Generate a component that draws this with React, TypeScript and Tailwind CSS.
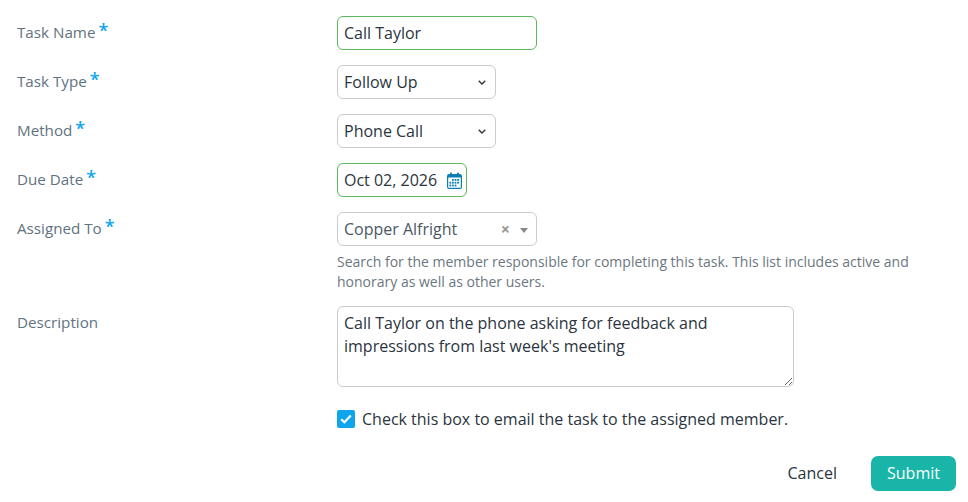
import { ReactNode } from 'react';

const fieldBase = "h-[34px] rounded-[6px] border bg-white px-[6px] text-[16px] text-[#2b3440] outline-none";

function Row({ label, required, children, className }: { label: string; required?: boolean; children: ReactNode; className?: string }) {
    return (
        <div className={`flex items-start ${className ?? ''}`}>
            <div className="w-[320px] shrink-0 pt-[5px] text-[15.2px] leading-[22px] text-[#5f7380]">
                {label}
                {required && <span className="relative -top-[1px] ml-[3px] text-[18px] font-semibold leading-none text-[#0ea5ec]">*</span>}
            </div>
            <div className="min-w-0 flex-1">{children}</div>
        </div>
    );
}

function CalendarIcon() {
    return (
        <svg width="15" height="17" viewBox="0 0 15 17" className="shrink-0">
            <rect x="0.6" y="2.6" width="13.8" height="13.8" rx="1.5" fill="none" stroke="#0b7fb5" strokeWidth="1.2" />
            <rect x="1" y="3" width="13" height="2.5" fill="#0b7fb5" />
            <rect x="3" y="0.5" width="2" height="3" rx="0.8" fill="#0b7fb5" />
            <rect x="10" y="0.5" width="2" height="3" rx="0.8" fill="#0b7fb5" />
            <g fill="#0b7fb5">
                <rect x="5" y="7" width="1.8" height="1.8" />
                <rect x="7.6" y="7" width="1.8" height="1.8" />
                <rect x="10.2" y="7" width="1.8" height="1.8" />
                <rect x="2.4" y="9.8" width="1.8" height="1.8" />
                <rect x="5" y="9.8" width="1.8" height="1.8" />
                <rect x="7.6" y="9.8" width="1.8" height="1.8" />
                <rect x="10.2" y="9.8" width="1.8" height="1.8" />
                <rect x="2.4" y="12.6" width="1.8" height="1.8" />
                <rect x="5" y="12.6" width="1.8" height="1.8" />
                <rect x="7.6" y="12.6" width="1.8" height="1.8" />
            </g>
        </svg>
    );
}

function Chevron() {
    return (
        <svg width="8" height="5" viewBox="0 0 8 5" className="pointer-events-none absolute right-[10px] top-[15px]">
            <path d="M0.7 0.7L4 4l3.3-3.3" fill="none" stroke="#333" strokeWidth="1.3" />
        </svg>
    );
}

function SelectBox({ value }: { value: string }) {
    return (
        <div className="relative w-[159px]">
            <select defaultValue={value} className={`${fieldBase} block w-full appearance-none border-[#cccccc]`}>
                <option>{value}</option>
            </select>
            <Chevron />
        </div>
    );
}

export default function App() {
    return (
        <div className="h-[502px] w-[968px] overflow-hidden bg-white pl-[17px] pr-[12px] pt-[16px] font-['Open_Sans',sans-serif]">
            <Row label="Task Name" required>
                <input defaultValue="Call Taylor" className={`${fieldBase} block w-[200px] border-[#5cb85c]`} />
            </Row>
            <Row label="Task Type" required className="mt-[15px]">
                <SelectBox value="Follow Up" />
            </Row>
            <Row label="Method" required className="mt-[15px]">
                <SelectBox value="Phone Call" />
            </Row>
            <Row label="Due Date" required className="mt-[15px]">
                <div className={`${fieldBase} flex w-[130px] items-center justify-between border-[#5cb85c] pr-[4px]`}>
                    <span>Oct 02, 2026</span>
                    <CalendarIcon />
                </div>
            </Row>
            <Row label="Assigned To" required className="mt-[15px]">
                <div className={`${fieldBase} relative flex w-[200px] items-center border-[#cccccc] text-[#4a5864]`}>
                    <span>Copper Alfright</span>
                    <span className="absolute right-[26px] top-[5px] text-[16px] font-bold leading-[22px] text-[#999999]">×</span>
                    <span className="absolute right-[8px] top-[15px] h-0 w-0 border-x-[4px] border-t-[5px] border-x-transparent border-t-[#888888]" />
                </div>
                <p className="mt-[6px] w-[590px] text-[14px] leading-[20px] text-[#6b7780]">
                    Search for the member responsible for completing this task. This list includes active and honorary as well as other users.
                </p>
            </Row>
            <Row label="Description" className="mt-[14px]">
                <textarea
                    defaultValue={"Call Taylor on the phone asking for feedback and impressions from last week's meeting"}
                    className="block h-[81px] w-[457px] rounded-[6px] border border-[#cccccc] bg-white px-[6px] py-[5px] text-[16px] leading-[23px] text-[#2b3440] outline-none"
                />
                <label className="mt-[21px] flex items-center text-[16px] leading-[22px] text-[#2b3440]">
                    <span className="mr-[7px] flex h-[18px] w-[18px] items-center justify-center rounded-[2px] bg-[#0ea5ec]">
                        <svg width="12" height="10" viewBox="0 0 12 10">
                            <path d="M1.2 5.2l3.2 3.1 6.4-6.8" fill="none" stroke="#fff" strokeWidth="2.2" />
                        </svg>
                    </span>
                    Check this box to email the task to the assigned member.
                </label>
            </Row>
            <div className="mt-[26px] flex items-center justify-end gap-[34px]">
                <span className="pb-[2px] text-[16px] text-[#2b3440]">Cancel</span>
                <button className="h-[35px] w-[85px] rounded-[7px] bg-[#19b5a8] pb-[2px] text-[16px] text-white">Submit</button>
            </div>
        </div>
    );
}
